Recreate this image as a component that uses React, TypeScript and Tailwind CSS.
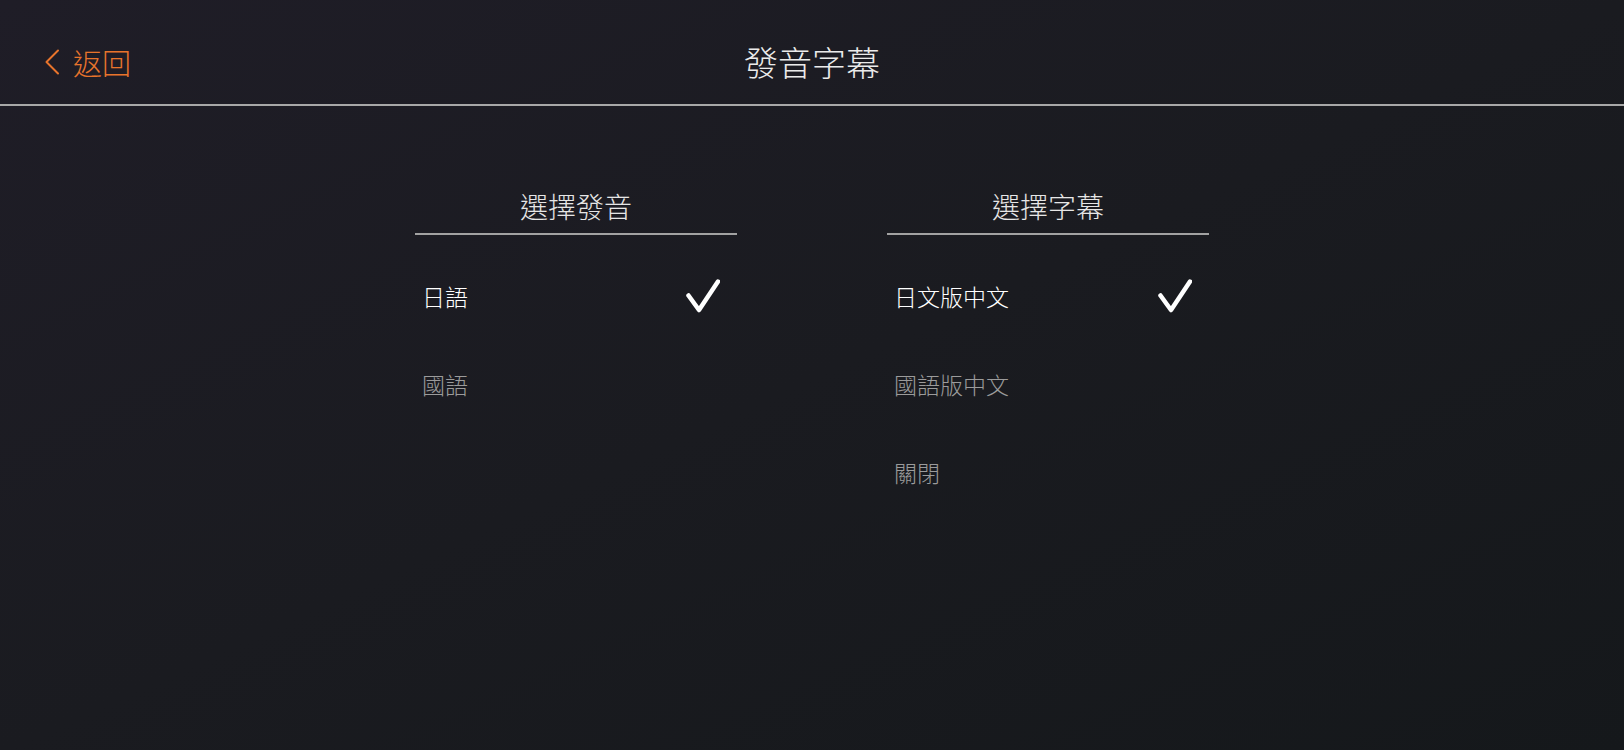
import { useState } from "react";

const FONT = { fontFamily: '"Noto Sans CJK TC", "Noto Sans", sans-serif' };

function Check() {
  return (
    <svg width="34" height="34" viewBox="0 0 34 34" fill="none">
      <path
        d="M2.5 16.5L13 31L32 2.5"
        stroke="#ffffff"
        strokeWidth={4.5}
        strokeLinecap="round"
        strokeLinejoin="round"
      />
    </svg>
  );
}

function OptionColumn({
  title,
  options,
  selected,
  onSelect,
}: {
  title: string;
  options: string[];
  selected: number;
  onSelect: (i: number) => void;
}) {
  return (
    <div className="w-[322px]">
      <div className="pb-[7px] border-b-2 border-[#a2a2a2] text-center text-[28px] leading-[40px] text-[#e6e6e6]">
        {title}
      </div>
      <ul className="mt-[17px]">
        {options.map((opt, i) => (
          <li
            key={opt}
            onClick={() => onSelect(i)}
            className="h-[88px] flex items-center justify-between pl-[7px] pr-[17px] cursor-pointer"
          >
            <span
              className={
                i === selected
                  ? "text-[23px] text-white"
                  : "text-[23px] text-[#9b9b9b]"
              }
            >
              {opt}
            </span>
            {i === selected && <Check />}
          </li>
        ))}
      </ul>
    </div>
  );
}

export default function App() {
  const [audio, setAudio] = useState(0);
  const [subtitle, setSubtitle] = useState(0);

  return (
    <div
      className="w-full h-[750px] overflow-hidden font-light bg-linear-to-br from-[#1f1d27] via-[#1a1b20] to-[#15181b]"
      style={FONT}
    >
      <header className="h-[106px] pt-[20px] grid grid-cols-3 items-center border-b-2 border-[#a8a8a8]">
        <button className="flex items-center gap-[13px] pl-[44px] text-[#e8742c] justify-self-start">
          <svg width="16" height="26" viewBox="0 0 16 26" fill="none">
            <path
              d="M14 1.5L2.5 13L14 24.5"
              stroke="currentColor"
              strokeWidth={2}
              strokeLinecap="round"
              strokeLinejoin="round"
            />
          </svg>
          <span className="text-[29px] leading-none">返回</span>
        </button>
        <h1 className="text-center text-[34px] leading-none text-[#ebebeb]">
          發音字幕
        </h1>
        <div />
      </header>

      <main className="pt-[80px] flex justify-center gap-[150px]">
        <OptionColumn
          title="選擇發音"
          options={["日語", "國語"]}
          selected={audio}
          onSelect={setAudio}
        />
        <OptionColumn
          title="選擇字幕"
          options={["日文版中文", "國語版中文", "關閉"]}
          selected={subtitle}
          onSelect={setSubtitle}
        />
      </main>
    </div>
  );
}
